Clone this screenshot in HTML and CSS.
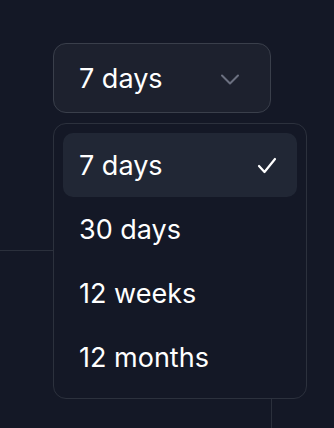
FILE: index.html
```html
<!DOCTYPE html>
<html lang="en">
<head>
  <meta charset="UTF-8" />
  <meta name="viewport" content="width=device-width, initial-scale=1.0"/>
  <title>Range select</title>
  <link rel="stylesheet" href="styles.css">
</head>
<body>

  <div class="select-wrap">
    <button class="select-btn">
      <span>7 days</span>
      <svg class="chevron" width="20" height="11" viewBox="0 0 20 11">
        <path d="M2 1.5 L10 9.5 L18 1.5" fill="none" stroke="#6b7080" stroke-width="2" stroke-linecap="round" stroke-linejoin="round"/>
      </svg>
    </button>

    <ul class="menu">
      <li class="item active">
        <span>7 days</span>
        <svg class="check" width="20" height="17" viewBox="0 0 20 17">
          <path d="M2 9 L7.5 15 L18 2" fill="none" stroke="white" stroke-width="2.2" stroke-linecap="round" stroke-linejoin="round"/>
        </svg>
      </li>
      <li class="item">30 days</li>
      <li class="item">12 weeks</li>
      <li class="item">12 months</li>
    </ul>
  </div>

  <div class="chart">
    <div class="cell left"></div>
    <div class="cell right"></div>
  </div>

</body>
</html>
```

FILE: styles.css
```css
html, body {
  margin: 0;
  padding: 0;
  height: 100%;
  background: #141826;
  font-family: Inter, "Noto Sans", sans-serif;
  color: white;
  overflow: hidden;
}

body {
  display: flex;
  flex-direction: column;
}

.select-wrap {
  position: relative;
  z-index: 2;
  padding: 43px 0 0 53px;
  width: 218px;
}

.select-btn {
  box-sizing: border-box;
  width: 218px;
  height: 70px;
  display: flex;
  align-items: center;
  justify-content: space-between;
  padding: 0 30px 0 25px;
  background: #1d212e;
  border: 1.5px solid #3a3f4b;
  border-radius: 13px;
  color: white;
  font-family: inherit;
  font-size: 27px;
  cursor: pointer;
}

.select-btn span {
  padding-top: 1px;
}

.chevron {
  display: block;
  margin-top: 2px;
}

.menu {
  position: absolute; /* всплывающее меню поверх графика */
  top: 123px;
  left: 53px;
  box-sizing: border-box;
  width: 254px;
  margin: 0;
  padding: 9px;
  list-style: none;
  background: #141826;
  border: 1.5px solid #2c313d;
  border-radius: 13px;
}

.item {
  display: flex;
  align-items: center;
  justify-content: space-between;
  height: 64px;
  padding: 0 20px 0 16px;
  border-radius: 10px;
  font-size: 27px;
}

.item.active {
  background: #212735;
}

.check {
  display: block;
}

.chart {
  flex: 1;
  margin-top: 137px;
  display: grid;
  grid-template-columns: 271px 1fr;
}

.cell.left {
  border-top: 1.5px solid #2b303c;
}

.cell.right {
  border-left: 1.5px solid #2b303c;
}
```
